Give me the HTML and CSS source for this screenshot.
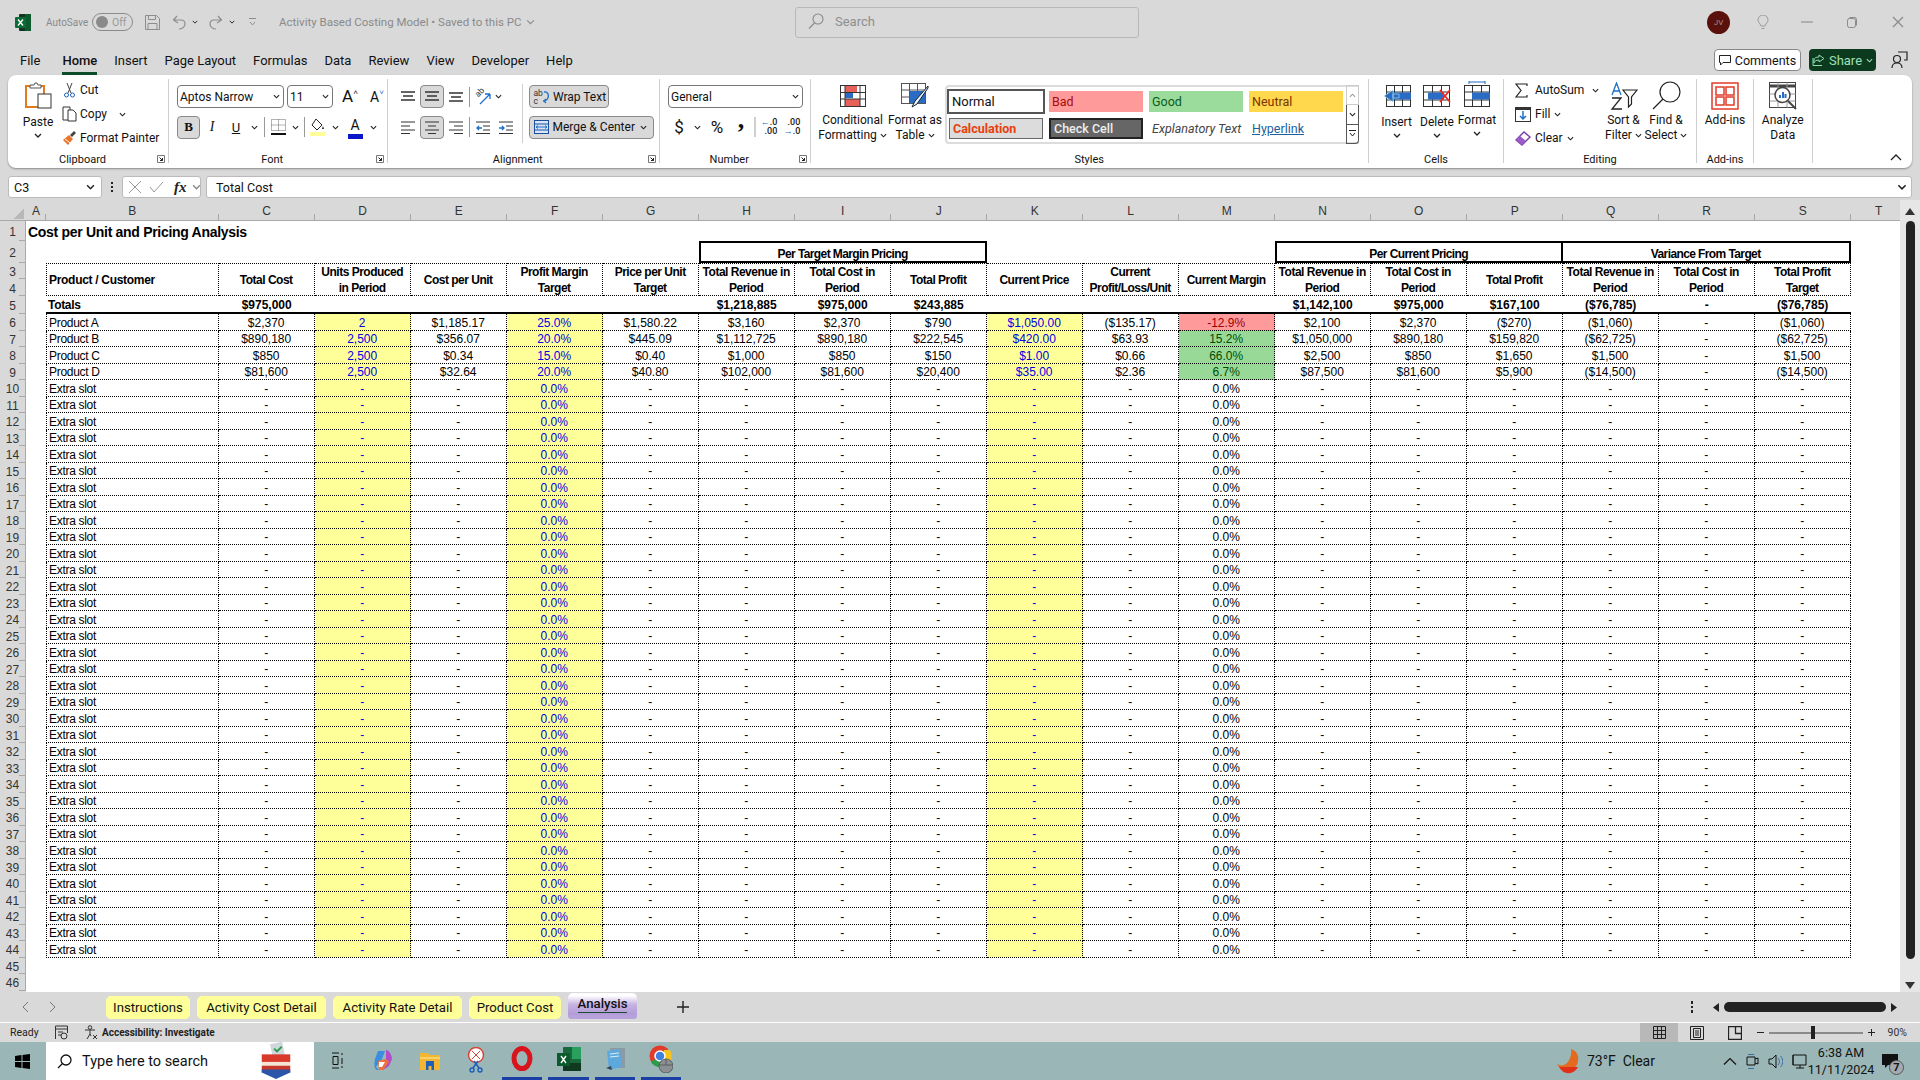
FILE: index.html
```html
<!DOCTYPE html>
<html lang="en">
<head>
<meta charset="utf-8">
<title>Activity Based Costing Model</title>
<link rel="stylesheet" href="styles.css">
</head>
<body>
<svg class="defs" width="0" height="0">
  <symbol id="chv" viewBox="0 0 8 5"><path d="M1 1l3 3 3-3" fill="none" stroke="#222" stroke-width="1.3"/></symbol>
  <symbol id="launch" viewBox="0 0 8 8"><path d="M.5.5h7v7h-7z" fill="none" stroke="#777"/><path d="M2.5 2.5l3 3M3 5.5h2.5V3" fill="none" stroke="#222"/></symbol>
</svg>
<div class="app">

<header class="titlebar">
  <div class="tb-left">
    <svg class="xl" width="16" height="17" viewBox="0 0 16 17"><rect x="4" width="12" height="17" rx="1" fill="#12351f"/><rect x="10" width="6" height="17" fill="#0c5a2e"/><rect y="3" width="11" height="11" rx="1" fill="#0d6b38"/><path d="M3 5.5l5 6M8 5.5l-5 6" stroke="#fff" stroke-width="1.3"/></svg>
    <span class="autosave">AutoSave</span>
    <span class="toggle"><i></i>Off</span>
    <svg class="t-save" width="15" height="15" viewBox="0 0 15 15" fill="none" stroke="#8d8d8d"><path d="M.5.5h11l3 3v11H.5z"/><path d="M3.5.5v4h7v-4M3 14.5v-6h9v6"/></svg>
    <svg class="t-undo" width="14" height="15" viewBox="0 0 14 15" fill="none" stroke="#8d8d8d" stroke-width="1.2"><path d="M5 1L1.500 5 6 8M1.500 5H9c3 0 4 2 4 4 0 3-3 5-6 5"/></svg>
    <svg class="t-c1" width="6" height="4"><use href="#chv"/></svg>
    <svg class="t-redo" width="14" height="15" viewBox="0 0 14 15" fill="none" stroke="#8d8d8d" stroke-width="1.2"><path d="M9 1l3.500 4L8 8M12.500 5H5C2 5 1 7 1 9c0 3 3 5 6 5"/></svg>
    <svg class="t-c2" width="6" height="4"><use href="#chv"/></svg>
    <svg class="t-qat" width="7" height="8" viewBox="0 0 7 8" fill="none" stroke="#8d8d8d"><path d="M0 .5h7M1 4l2.500 3L6 4"/></svg>
    <span class="doc">Activity Based Costing Model • Saved to this PC</span>
    <svg class="t-c3" width="9" height="6" viewBox="0 0 8 5" fill="none" stroke="#8d8d8d"><path d="M1 1l3 3 3-3"/></svg>
  </div>
  <div class="search">
    <svg width="16" height="16" viewBox="0 0 16 16" fill="none" stroke="#8a8a8a" stroke-width="1.1"><circle cx="10" cy="6" r="5"/><path d="M6.500 10L1 15.500"/></svg>
    <span>Search</span>
  </div>
  <div class="tb-right">
    <span class="avatar">JV</span>
    <svg class="t-bulb" width="12" height="15" viewBox="0 0 12 15" fill="none" stroke="#9a9a9a"><path d="M4 11C3 8 1 7.500 1 5a5 5 0 0110 0c0 2.500-2 3-3 6zM4.500 13.500h3"/></svg>
    <svg class="t-min" width="12" height="2"><path d="M0 1h12" stroke="#a0a0a0" stroke-width="1.500"/></svg>
    <svg class="t-max" width="10" height="11" viewBox="0 0 10 11" fill="none" stroke="#8a8a8a"><rect x=".5" y="1.500" width="8" height="9" rx="2"/><path d="M2.500.5h5a2 2 0 012 2v6"/></svg>
    <svg class="t-close" width="12" height="12" fill="none" stroke="#8a8a8a" stroke-width="1.200"><path d="M1 1l10 10M11 1L1 11"/></svg>
  </div>
</header>

<nav class="menubar">
  <span class="m-file">File</span><span class="m-on">Home</span><span>Insert</span><span>Page Layout</span><span>Formulas</span><span>Data</span><span>Review</span><span>View</span><span>Developer</span><span>Help</span>
  <div class="m-right">
    <span class="comments"><svg width="12" height="11" viewBox="0 0 12 11" fill="none" stroke="#222"><path d="M.5.5h11v7H4L1.500 10V7.500h-1z"/></svg>Comments</span>
    <span class="share"><svg width="13" height="12" viewBox="0 0 13 12" fill="none" stroke="#8fdcae"><path d="M7 1l5 3.500L7 8V6C4 6 3 7 2 9V6c0-2 2-3 5-3zM1 4v7.500h9"/></svg>Share<svg width="7" height="5" viewBox="0 0 8 5" fill="none" stroke="#9fe0b8" stroke-width="1.200"><path d="M1 1l3 3 3-3"/></svg></span>
    <svg class="presenter" width="17" height="18" viewBox="0 0 17 18" fill="none" stroke="#222" stroke-width="1.200"><circle cx="6" cy="8" r="3.500"/><path d="M1 17c0-3 2-5 5-5s5 2 5 5M7 1h9v8h-3"/></svg>
  </div>
</nav>

<section class="ribbon">
  <div class="grp g-clip">
    <div class="gbody">
      <div class="big w48">
        <div class="big-ic"><svg width="27" height="27" viewBox="0 0 27 27"><rect x="1" y="4" width="18" height="21" fill="#fff" stroke="#e07b20" stroke-width="2"/><path d="M5 6V3h4l1-2 2 0 1 2h3v3z" fill="#fff" stroke="#555"/><rect x="13" y="12" width="13" height="14" fill="#fff" stroke="#333"/></svg></div>
        <div class="big-tx low">Paste</div>
        <svg class="chv" width="8" height="5"><use href="#chv"/></svg>
      </div>
      <div class="rows3">
        <div class="r3"><svg class="r3-ic" width="11" height="16" viewBox="0 0 11 16" fill="none" stroke="#444"><path d="M3 1l4 10M8 1L4 11"/><circle cx="2.500" cy="13" r="2" stroke="#1d5fb8"/><circle cx="8.500" cy="13" r="2" stroke="#1d5fb8"/></svg>Cut</div>
        <div class="r3"><svg class="r3-ic" width="15" height="16" viewBox="0 0 15 16" fill="none" stroke="#333"><path d="M1 1h7v13H1z"/><path d="M6 4h5l3 3v8H6z" fill="#fff"/></svg>Copy<svg class="copy-c" width="7" height="5"><use href="#chv"/></svg></div>
        <div class="r3"><svg class="r3-ic" width="15" height="16" viewBox="0 0 15 16"><path d="M8 5l4-4 2 2-4 4z" fill="#444"/><path d="M1 10l6-5 4 4-5 6z" fill="#e8742a"/><path d="M3 9l5 4" stroke="#fff"/></svg>Format Painter</div>
      </div>
    </div>
    <div class="glabel"><span>Clipboard</span><svg width="8" height="8"><use href="#launch"/></svg></div>
  </div>

  <div class="grp g-font">
    <div class="gbody two">
      <div class="row">
        <span class="sel sel-font">Aptos Narrow<svg width="7" height="5"><use href="#chv"/></svg></span>
        <span class="sel sel-size">11<svg width="7" height="5"><use href="#chv"/></svg></span>
        <span class="s grow">A<sup>˄</sup></span><span class="s shrink">A<sup>˅</sup></span>
      </div>
      <div class="row">
        <span class="s w23 on fb">B</span><span class="s w24 fi">I</span><span class="s w24 fu">U</span>
        <span class="s w12"><svg width="7" height="5"><use href="#chv"/></svg></span><span class="s w8"><i class="vdiv"></i></span>
        <span class="s w20"><svg width="15" height="17" viewBox="0 0 15 17" fill="none" stroke="#666"><path stroke-dasharray="1 1" d="M.5.5h14v11H.5zM7.500.5v11M.5 6h14"/><path d="M0 15h15" stroke="#111" stroke-width="2"/></svg></span>
        <span class="s w14"><svg width="7" height="5"><use href="#chv"/></svg></span><span class="s w4"><i class="vdiv"></i></span>
        <span class="s w22"><svg width="15" height="18" viewBox="0 0 15 18"><path d="M6 1l6 6-5 5-5-5z" fill="#fff" stroke="#222"/><path d="M13 8l1 3h-2z" fill="#222"/><rect y="14" width="15" height="4" fill="#ffff99"/></svg></span>
        <span class="s w14"><svg width="7" height="5"><use href="#chv"/></svg></span>
        <span class="s w26 fcolor">A</span><span class="s w10"><svg width="7" height="5"><use href="#chv"/></svg></span>
      </div>
    </div>
    <div class="glabel"><span>Font</span><svg width="8" height="8"><use href="#launch"/></svg></div>
  </div>

  <div class="grp g-align">
    <div class="gbody">
      <div class="a-left">
        <div class="row">
          <span class="s w24"><svg width="14" height="11" stroke="#333"><path d="M0 1h14M2 5h10M0 9h14" stroke-width="1.300"/></svg></span>
          <span class="s w24 on"><svg width="14" height="11" stroke="#333"><path d="M0 1h14M2 5h10M0 9h14" stroke-width="1.300"/></svg></span>
          <span class="s w24"><svg width="14" height="11" stroke="#333"><path d="M0 2h14M2 6h10M0 10h14" stroke-width="1.300"/></svg></span>
          <span class="s w4"><i class="vdiv"></i></span>
          <span class="s w22 ori-wrap"><span class="ori">ab</span><svg width="16" height="16" viewBox="0 0 16 16" fill="none"><path d="M5 15L15 5M15 5v5M15 5h-5" stroke="#1d6fc8" stroke-width="1.300"/></svg></span>
          <span class="s w10"><svg width="7" height="5"><use href="#chv"/></svg></span>
        </div>
        <div class="row">
          <span class="s w24"><svg width="14" height="13" stroke="#333"><path d="M0 1h14M0 5h9M0 9h14M0 12.500h9" stroke-width="1.200"/></svg></span>
          <span class="s w24 on"><svg width="14" height="13" stroke="#333"><path d="M0 1h14M3 5h8M0 9h14M3 12.500h8" stroke-width="1.200"/></svg></span>
          <span class="s w24"><svg width="14" height="13" stroke="#333"><path d="M0 1h14M5 5h9M0 9h14M5 12.500h9" stroke-width="1.200"/></svg></span>
          <span class="s w4"><i class="vdiv"></i></span>
          <span class="s w22"><svg width="14" height="13" fill="none" stroke="#333"><path d="M0 1h14M7 5h7M7 9h7M0 12.500h14"/><path d="M6 7H1M3 5L1 7l2 2" stroke="#1d6fc8" stroke-width="1.300"/></svg></span>
          <span class="s w24"><svg width="14" height="13" fill="none" stroke="#333"><path d="M0 1h14M7 5h7M7 9h7M0 12.500h14"/><path d="M0 7h5M3 5l2 2-2 2" stroke="#1d6fc8" stroke-width="1.300"/></svg></span>
        </div>
      </div>
      <div class="a-right">
        <span class="btn b-wrap"><span class="abc">ab<br>c</span><svg width="7" height="16" viewBox="0 0 7 16" fill="none"><path d="M1 3c6-1 6 9-1 9M3 10l-2 2 2 2" stroke="#1d6fc8" stroke-width="1.300"/></svg>Wrap Text</span>
        <span class="btn b-merge"><svg width="15" height="14" viewBox="0 0 15 14"><rect x=".5" y=".5" width="14" height="13" fill="#d8e6f7" stroke="#1d4f9c"/><path d="M1 4h13M1 10h13" stroke="#1d4f9c"/><path d="M2 7h11M4 5.500L2 7l2 1.500M11 5.500L13 7l-2 1.500" fill="none" stroke="#1d6fc8"/></svg>Merge &amp; Center<svg class="push" width="7" height="5"><use href="#chv"/></svg></span>
      </div>
    </div>
    <div class="glabel"><span>Alignment</span><svg width="8" height="8"><use href="#launch"/></svg></div>
  </div>

  <div class="grp g-num">
    <div class="gbody two">
      <div class="row"><span class="sel sel-num">General<svg width="7" height="5"><use href="#chv"/></svg></span></div>
      <div class="row">
        <span class="s w22 nsym">$</span><span class="s w14"><svg width="7" height="5"><use href="#chv"/></svg></span>
        <span class="s w26 nsym">%</span><span class="s w22 ncomma">,</span>
        <span class="s w6"><i class="vdiv lt"></i></span>
        <span class="s w22 dec"><span><b>←</b>.0<br>.00</span></span><span class="s w24 dec"><span>.00<br><b>→</b>.0</span></span>
      </div>
    </div>
    <div class="glabel"><span>Number</span><svg width="8" height="8"><use href="#launch"/></svg></div>
  </div>

  <div class="grp g-style">
    <div class="gbody">
      <div class="big w68 ml8">
        <div class="big-ic"><svg width="26" height="22" viewBox="0 0 26 22" fill="#fff" stroke="#333"><rect x=".5" y=".5" width="25" height="21"/><rect x="5" y="1" width="12" height="6" fill="#e8605a" stroke="none"/><rect x="5" y="8" width="8" height="5" fill="#2a6cc4" stroke="none"/><rect x="5" y="14" width="15" height="7" fill="#e8605a" stroke="none"/><path d="M.5 7.500h25M.5 14h25M5 .5v21M20 .5v21"/></svg></div>
        <div class="big-tx">Conditional<br>Formatting <svg width="7" height="5"><use href="#chv"/></svg></div>
      </div>
      <div class="big w57">
        <div class="big-ic"><svg width="28" height="25" viewBox="0 0 28 25" fill="#fff" stroke="#555"><rect x=".5" y=".5" width="24" height="20"/><path d="M.5 7h24M.5 14h24M8.500.5v20M16.500.5v20"/><rect x="9" y="8" width="15" height="12" fill="#2a6cc4" stroke="none"/><path d="M27 3L14 18l-3 6 5-3L27 5z" fill="#e9f1fb" stroke="#123"/></svg></div>
        <div class="big-tx">Format as<br>Table <svg width="7" height="5"><use href="#chv"/></svg></div>
      </div>
      <div class="gallery">
        <div class="cells">
          <span class="st st-normal">Normal</span><span class="st st-bad">Bad</span><span class="st st-good">Good</span><span class="st st-neutral">Neutral</span>
          <span class="st st-calc">Calculation</span><span class="st st-check">Check Cell</span><span class="st st-expl">Explanatory Text</span><span class="st st-link">Hyperlink</span>
        </div>
        <div class="spin">
          <span class="spa"><svg width="7" height="5" class="flip" viewBox="0 0 8 5" fill="none" stroke="#999" stroke-width="1.200"><path d="M1 1l3 3 3-3"/></svg></span>
          <span class="spb"><svg width="7" height="5"><use href="#chv"/></svg></span>
          <span class="spc"><svg width="7" height="8" fill="none" stroke="#222"><path d="M0 .5h7M1 3l2.500 3L6 3"/></svg></span>
        </div>
      </div>
    </div>
    <div class="glabel nol"><span>Styles</span></div>
  </div>

  <div class="grp g-cells">
    <div class="gbody">
      <div class="big w41">
        <div class="big-ic"><svg width="28" height="22" viewBox="0 0 28 22" fill="#fff" stroke="#333"><rect x="3.500" y=".5" width="24" height="21"/><path d="M3.500 7h24M3.500 15h24M11.500.5v21M19.500.5v21"/><rect x="8" y="7.500" width="20" height="7" fill="#2a6cc4" stroke="none"/><path d="M10 5L1 11l9 6zM10 9h6v4h-6z" fill="#2a6cc4" stroke="#cfe" stroke-width=".5"/></svg></div>
        <div class="big-tx low">Insert</div><svg class="chv" width="8" height="5"><use href="#chv"/></svg>
      </div>
      <div class="big w40">
        <div class="big-ic"><svg width="28" height="22" viewBox="0 0 28 22" fill="#fff" stroke="#333"><rect x=".5" y=".5" width="26" height="21"/><path d="M.5 7h26M.5 15h26M9.500.5v21M18.500.5v21"/><rect x="5" y="7.500" width="16" height="7" fill="#2a6cc4" stroke="none"/><path d="M17 5l10 12M27 5L17 17" stroke="#ee2a20" stroke-width="1.800" fill="none"/></svg></div>
        <div class="big-tx low">Delete</div><svg class="chv" width="8" height="5"><use href="#chv"/></svg>
      </div>
      <div class="big w40">
        <div class="big-ic up"><svg width="28" height="26" viewBox="0 0 28 26" fill="#fff" stroke="#333"><path d="M6 1h16M6 0v3M22 0v3" stroke="#1d6fc8"/><rect x="1.500" y="4.500" width="25" height="21"/><path d="M1.500 11h25M1.500 19h25M9.500 4.500v21M18.500 4.500v21"/><rect x="9" y="11.500" width="18" height="7" fill="#2a6cc4" stroke="none"/></svg></div>
        <div class="big-tx">Format</div><svg class="chv" width="8" height="5"><use href="#chv"/></svg>
      </div>
    </div>
    <div class="glabel nol"><span>Cells</span></div>
  </div>

  <div class="grp g-edit">
    <div class="gbody">
      <div class="rows3 ed">
        <div class="r3"><span class="ed-ic"><svg width="13" height="15" viewBox="0 0 13 15" fill="none" stroke="#222" stroke-width="1.200"><path d="M12 3V1H1l5 6.500L1 14h11v-2"/></svg></span>AutoSum<svg class="auto-c" width="7" height="5"><use href="#chv"/></svg></div>
        <div class="r3"><span class="ed-ic"><svg width="16" height="15" viewBox="0 0 16 15" fill="#fff" stroke="#333"><rect x=".5" y="2.500" width="15" height="12"/><path d="M8 4v8M5 9l3 3 3-3" fill="none" stroke="#1d6fc8" stroke-width="1.500"/><path d="M0 1h16" stroke="#333" stroke-width="2"/></svg></span>Fill<svg class="fill-c" width="7" height="5"><use href="#chv"/></svg></div>
        <div class="r3"><span class="ed-ic"><svg width="16" height="15" viewBox="0 0 16 15"><path d="M1 9l8-8 6 5-8 8z" fill="#fff" stroke="#7a3fa8" stroke-width="1.400"/><path d="M1 9l4-4 6 5-4 4z" fill="#9a5cc8"/></svg></span>Clear<svg class="fill-c" width="7" height="5"><use href="#chv"/></svg></div>
      </div>
      <div class="big w43">
        <div class="big-ic"><svg width="28" height="28" viewBox="0 0 28 28" fill="none"><path d="M2 13l4.500-12L11 13M3.500 9h6" stroke="#1d6fc8" stroke-width="1.300"/><path d="M2 16h9L2 27h10" stroke="#222" stroke-width="1.300"/><path d="M13 8h14l-5.500 7v7l-3 3V15z" stroke="#222" stroke-width="1.200"/></svg></div>
        <div class="big-tx">Sort &amp;<br>Filter <svg width="7" height="5"><use href="#chv"/></svg></div>
      </div>
      <div class="big w42">
        <div class="big-ic"><svg width="29" height="29" viewBox="0 0 29 29" fill="none" stroke="#222" stroke-width="1.200"><circle cx="18" cy="11" r="10"/><path d="M11 18L1 28"/></svg></div>
        <div class="big-tx">Find &amp;<br>Select <svg width="7" height="5"><use href="#chv"/></svg></div>
      </div>
    </div>
    <div class="glabel nol"><span>Editing</span></div>
  </div>

  <div class="grp g-add">
    <div class="gbody cen">
      <div class="big">
        <div class="big-ic"><svg width="28" height="28" viewBox="0 0 28 28" fill="#fff" stroke="#e23b2a" stroke-width="1.500"><rect x="1" y="1" width="26" height="26" fill="none"/><rect x="5" y="5" width="8" height="8"/><rect x="15" y="5" width="8" height="8"/><rect x="5" y="15" width="8" height="8"/><rect x="15" y="15" width="8" height="8"/></svg></div>
        <div class="big-tx">Add-ins</div>
      </div>
    </div>
    <div class="glabel nol"><span>Add-ins</span></div>
  </div>

  <div class="grp g-ana">
    <div class="gbody cen">
      <div class="big">
        <div class="big-ic"><svg width="28" height="28" viewBox="0 0 28 28" fill="#fff" stroke="#444"><rect x=".5" y=".5" width="26" height="25"/><path d="M.5 4h26" stroke-width="3"/><path d="M.5 12h26M.5 19h26M9 .5v25M18 .5v25" stroke="#999"/><circle cx="13.500" cy="13" r="7.500" stroke-width="1.500"/><path d="M11 16v-3M14 16v-6M16.500 16v-4" stroke="#2a6cc4" stroke-width="2"/><path d="M19 19l8 8" stroke-width="2"/></svg></div>
        <div class="big-tx">Analyze<br>Data</div>
      </div>
    </div>
  </div>

  <div class="rib-end"><svg width="12" height="7" viewBox="0 0 12 7" fill="none" stroke="#222" stroke-width="1.300"><path d="M1 6l5-5 5 5"/></svg></div>
</section>

<section class="formula">
  <div class="namebox">C3<svg width="9" height="6" viewBox="0 0 8 5"><use href="#chv"/></svg></div>
  <div class="fdots"><i></i><i></i><i></i></div>
  <div class="fbtns">
    <svg width="14" height="14" stroke="#999" fill="none"><path d="M1 1l12 12M13 1L1 13"/></svg>
    <svg width="15" height="12" stroke="#999" fill="none"><path d="M1 6l4 5 9-10"/></svg>
    <span class="fx">fx</span>
    <svg width="9" height="6" viewBox="0 0 8 5" fill="none" stroke="#888" stroke-width="1.200"><path d="M1 1l3 3 3-3"/></svg>
  </div>
  <div class="finput"><span>Total Cost</span><svg width="10" height="6" viewBox="0 0 8 5"><use href="#chv"/></svg></div>
</section>

<main class="sheetwrap">
  <div class="sheet" id="sheet"></div>
  <div class="vscroll">
    <svg width="10" height="7"><path d="M5 0l5 7H0z" fill="#333"/></svg>
    <i></i>
    <svg width="10" height="7"><path d="M5 7l5-7H0z" fill="#333"/></svg>
  </div>
</main>

<section class="tabsbar">
  <svg class="tnav n1" width="7" height="12" fill="none" stroke="#777"><path d="M6 1L1 6l5 5"/></svg>
  <svg class="tnav n2" width="7" height="12" fill="none" stroke="#777"><path d="M1 1l5 5-5 5"/></svg>
  <div class="tabs">
    <span class="tab t1">Instructions</span><span class="tab t2">Activity Cost Detail</span><span class="tab t3">Activity Rate Detail</span><span class="tab t4">Product Cost</span><span class="tab t5"><b>Analysis</b></span>
  </div>
  <svg class="tplus" width="12" height="12" stroke="#222" stroke-width="1.400"><path d="M6 0v12M0 6h12"/></svg>
  <div class="hs">
    <span class="hdots"><i></i><i></i><i></i></span>
    <svg width="6" height="9"><path d="M6 0v9L0 4.500z" fill="#222"/></svg>
    <i class="hthumb"></i>
    <svg width="6" height="9"><path d="M0 0v9l6-4.500z" fill="#222"/></svg>
  </div>
</section>

<footer class="status">
  <span class="ready">Ready</span>
  <svg class="st-macro" width="13" height="15" viewBox="0 0 13 15" fill="none" stroke="#333"><path d="M.5 1h12M.5 4h12M.5 14V1M12.500 1v7M3 7h5M3 10h3"/><circle cx="9" cy="11" r="3"/></svg>
  <svg class="st-acc" width="14" height="15" viewBox="0 0 14 15" fill="none" stroke="#333"><circle cx="6" cy="2.500" r="1.800"/><path d="M1 5h10M6 5v4M6 9l-3 5M6 9l1 2M9 10l4 4M13 10l-4 4"/></svg>
  <span class="acc">Accessibility: Investigate</span>
  <div class="st-right">
    <span class="view on-v"><svg width="13" height="13" stroke="#222" fill="none"><path d="M.5.5h12v12H.5zM4.500.5v12M8.500.5v12M.5 4.500h12M.5 8.500h12"/></svg></span>
    <span class="view"><svg width="14" height="14" fill="none" stroke="#222"><path d="M.5.5h13v13H.5z"/><path d="M3.500 2.500h7v9h-7zM5 5h4M5 7h4M5 9h4"/></svg></span>
    <span class="view"><svg width="14" height="14" fill="none" stroke="#222"><path d="M.5.5h13v13H.5zM7.500.5v7h6" stroke-width="1.300"/></svg></span>
    <svg class="zm-minus" width="7" height="1"><path d="M0 .5h7" stroke="#222"/></svg>
    <span class="slider"><i></i></span>
    <svg width="7" height="7" stroke="#222"><path d="M3.500 0v7M0 3.500h7"/></svg>
    <span class="pct">90%</span>
  </div>
</footer>

<footer class="taskbar">
  <span class="win"><svg width="15" height="15" fill="#000"><path d="M0 2l6.500-1v6H0zM7.500 1L15 0v7H7.500zM0 8h6.500v6L0 13zM7.500 8H15v7l-7.500-1z"/></svg></span>
  <div class="tsearch">
    <svg width="15" height="15" fill="none" stroke="#111" stroke-width="1.300"><circle cx="9" cy="6" r="5"/><path d="M5.500 9.500L1 14"/></svg>
    <span>Type here to search</span>
    <svg class="ballot" width="34" height="38" viewBox="0 0 34 40"><rect x="12" y="1" width="13" height="14" fill="#cfd6dc" transform="rotate(-12 18 8)"/><path d="M15 7l3 3 5-5" stroke="#2a9d4a" stroke-width="2" fill="none"/><path d="M2 13h30v8H2z" fill="#d8392b"/><path d="M2 21h30v6H2z" fill="#f2e5d5"/><path d="M2 25h30v7H2z" fill="#c9392b"/><path d="M2 32l15 7 15-7v-3H2z" fill="#2a55a8"/></svg>
  </div>
  <div class="tapps">
    <span class="tapp"><svg width="12" height="17" fill="none" stroke="#111"><path d="M1 1h7M1 16h7M2 4.500h5v8H2zM11 1v2M11 6v6M11 14v2"/></svg></span>
    <span class="tapp"><svg width="20" height="22" viewBox="0 0 20 22"><path d="M5 2h7l-3 8-6 8 3 3H4C1 20 1 15 2 10z" fill="#3a8ee0"/><path d="M13 1c3 0 6 5 6 9l-3 7-6 4-1-4 4-7z" fill="#b24cc8"/><path d="M5 12l8-2 3 3-6 8H6z" fill="#f0703a"/><path d="M6 13h6l-3 5H6z" fill="#fff"/></svg></span>
    <span class="tapp"><svg width="20" height="19" viewBox="0 0 20 19"><path d="M0 2h8l2 2h10v15H0z" fill="#f2b632"/><path d="M0 6h20v2H0z" fill="#f8d169"/><path d="M6 10h8v9h-2.500v-4h-3v4H6z" fill="#1d5fb8"/></svg></span>
    <span class="tapp"><svg width="20" height="26" viewBox="0 0 20 26" fill="none"><circle cx="10" cy="8" r="7.500" fill="#fff" stroke="#d8483a" stroke-width="1.500"/><path d="M6 4l8 8M14 4L6 12" stroke="#d8483a"/><path d="M8 14l5 7M12 14l-5 7" stroke="#1d5fb8" stroke-width="1.500"/><circle cx="6" cy="23" r="2" stroke="#1d5fb8" stroke-width="1.400"/><circle cx="14" cy="23" r="2" stroke="#1d5fb8" stroke-width="1.400"/></svg></span>
    <span class="tapp run"><svg width="22" height="25" fill="none"><ellipse cx="11" cy="12.500" rx="8" ry="10" stroke="#d8141c" stroke-width="5"/></svg></span>
    <span class="tapp run"><svg width="24" height="24" viewBox="0 0 24 24"><rect x="6" width="18" height="24" rx="1" fill="#17693b"/><rect x="15" width="9" height="12" fill="#2aa05f"/><rect x="6" y="16" width="18" height="8" fill="#0f3a20"/><rect y="6" width="13" height="13" fill="#0b5a2c"/><path d="M4 9l5 7M9 9l-5 7" stroke="#fff" stroke-width="1.300"/></svg></span>
    <span class="tapp run"><svg width="22" height="26" viewBox="0 0 22 26"><path d="M6 2h15v20H6z" fill="#8c9aa5"/><path d="M3 5l13-2 2 18-13 3z" fill="#5ea9dc"/><path d="M6 8l9-1M6 11l9-1" stroke="#d9eefc"/><path d="M2 22l5-2 1 4z" fill="#345"/></svg></span>
    <span class="tapp run"><svg width="24" height="28" viewBox="0 0 24 28"><circle cx="11" cy="11" r="10.500" fill="#e23b2a"/><path d="M2 17a10.500 10.500 0 0018 0l-5-5H9z" fill="#2a9d4a"/><path d="M15 5h6a10.500 10.500 0 01-4 15l-3-6z" fill="#f5c31c"/><circle cx="11" cy="11" r="5" fill="#3f7fe0" stroke="#fff" stroke-width="1.500"/><rect x="10" y="14" width="14" height="14" rx="7" fill="#8a8f92" stroke="#5a5f62"/><path d="M17 14v6M10 20h14" stroke="#5a5f62"/></svg></span>
  </div>
  <div class="tray">
    <svg class="moon" width="22" height="25" viewBox="0 0 22 25"><path d="M14 0c6 2 8 7 7 12-1 7-7 11-13 10-3-1-6-3-8-7 3 2 7 2 10-1 3-3 5-9 4-14z" fill="#e36a1f"/><path d="M2 18h19c-2 4-7 7-11 6-3 0-6-3-8-6z" fill="#e0301a"/></svg>
    <span class="weather">73°F&nbsp; Clear</span>
    <svg class="tr-up" width="14" height="8" fill="none" stroke="#111" stroke-width="1.200"><path d="M1 7.500l6-6 6 6"/></svg>
    <svg class="tr-cam" width="13" height="17" fill="none" stroke="#111"><path d="M1 4h8v8H1zM9 6l3-1v6l-3-1"/><path d="M2 1.500h6M2 15.500h6" stroke="#3a6ea5"/></svg>
    <svg class="tr-spk" width="15" height="15" fill="none" stroke="#111"><path d="M1 5h3l4-4v13l-4-4H1z"/><path d="M10 4c2 2 2 5 0 7M12.500 2c3 3 3 8 0 11" stroke="#3a6ea5"/></svg>
    <svg class="tr-net" width="17" height="15" fill="none" stroke="#111"><path d="M3 1h13v10H3zM3 1v10M10 11v3M6 14h8"/></svg>
    <span class="clock">6:38 AM<br>11/11/2024</span>
    <span class="notif"><svg width="16" height="14" fill="#111"><path d="M0 0h16v11H6l-3 3v-3H0z"/></svg><em>7</em></span>
  </div>
</footer>

</div>
<script src="script.js"></script>
</body>
</html>
```
FILE: styles.css
```css
* { box-sizing: border-box; }
html, body { margin: 0; padding: 0; }
body { width: 1920px; height: 1080px; overflow: hidden; background: #d9d9d9; font-family: Roboto, "Liberation Sans", sans-serif; color: #111; font-size: 12px; }
.defs { position: absolute; }
.app { display: flex; flex-direction: column; height: 1080px; }
svg { flex: none; display: block; }

/* title bar */
.titlebar { display: flex; align-items: center; height: 44px; flex: none; }
.tb-left { display: flex; align-items: center; width: 795px; padding-left: 15px; color: #8a8a8a; }
.autosave { margin-left: 15px; font-size: 10px; width: 40px; white-space: nowrap; }
.toggle { margin-left: 6px; width: 41px; height: 18px; border: 1.500px solid #8a8a8a; border-radius: 9px; display: flex; align-items: center; font-size: 10.500px; gap: 4px; padding-left: 3px; color: #999; }
.toggle i { width: 12px; height: 12px; border-radius: 50%; background: #8a8a8a; }
.t-save { margin-left: 12px; }
.t-undo { margin-left: 12px; }
.t-c1 { margin-left: 6px; }
.t-redo { margin-left: 11px; }
.t-c2 { margin-left: 6px; }
.t-qat { margin-left: 14px; }
.doc { margin-left: 23px; font-size: 11.500px; white-space: nowrap; }
.t-c3 { margin-left: 5px; }
.search { width: 344px; height: 31px; border: 1.500px solid #b8b8b8; border-radius: 3px; display: flex; align-items: center; padding: 0 0 2px 12px; gap: 11px; color: #8e8e8e; font-size: 13px; }
.tb-right { margin-left: auto; display: flex; align-items: center; padding-right: 16px; }
.avatar { width: 23px; height: 23px; border-radius: 50%; background: #5b110b; color: #a5908c; font-size: 8px; display: flex; align-items: center; justify-content: center; }
.t-bulb { margin-left: 27px; }
.t-min { margin-left: 32px; }
.t-max { margin-left: 34px; }
.t-close { margin-left: 35px; }

/* menu */
.menubar { display: flex; align-items: center; height: 31px; flex: none; padding: 1px 12px 0 20px; gap: 17px; font-size: 13px; }
.m-file { margin-right: 5px; }
.m-on { position: relative; font-weight: 500; }
.m-on::after { content: ""; position: absolute; left: 0; right: 0; bottom: -7px; height: 2.500px; background: #0e4d2a; }
.m-right { margin-left: auto; display: flex; align-items: center; }
.comments { width: 87px; height: 22px; background: #fff; border: 1px solid #888; border-radius: 4px; display: flex; align-items: center; justify-content: center; gap: 4px; font-size: 12.500px; }
.share { margin-left: 8px; width: 67px; height: 22px; background: #0b3a1e; border-radius: 4px; color: #9fe0b8; display: flex; align-items: center; justify-content: center; gap: 4px; font-size: 13px; }
.presenter { margin-left: 15px; }

/* ribbon */
.ribbon { display: flex; flex: none; height: 93px; margin: 0 8px; background: #fff; border-radius: 8px; padding-top: 4px; box-shadow: 0 1px 2px #8a8a8a; }
.grp { height: 84px; border-right: 1px solid #cfcfcf; flex: none; }
.g-clip { width: 161px; }
.g-font { width: 218.500px; }
.g-align { width: 272.500px; }
.g-num { width: 150.500px; }
.g-style { width: 558.500px; }
.g-cells { width: 135px; }
.g-edit { width: 193px; }
.g-add { width: 57px; }
.g-ana { width: 58.500px; }
.gbody { display: flex; height: 72px; }
.gbody.two { flex-direction: column; gap: 7.500px; padding: 6px 0 0 8px; }
.gbody.cen { justify-content: center; }
.row { display: flex; align-items: center; height: 23px; }
.glabel { display: flex; align-items: center; height: 16px; font-size: 11px; padding-right: 3px; }
.glabel span { flex: 1; text-align: center; }
.glabel.nol { padding-right: 0; }
.big { display: flex; flex-direction: column; align-items: center; flex: none; white-space: nowrap; padding: 0 4px; }
.big-ic { height: 33.500px; display: flex; align-items: center; justify-content: center; }
.big-ic.up { padding-bottom: 3px; }
.big-tx { line-height: 15px; text-align: center; font-size: 12px; }
.big-tx svg { display: inline-block; vertical-align: 1px; }
.big-tx.low { padding-top: 2px; }
.chv { margin-top: 3px; }
.w48 { width: 48px; margin-left: 6px; }
.w68 { width: 68px; }
.w57 { width: 57px; }
.w41 { width: 41px; margin-left: 7px; }
.w40 { width: 40px; }
.w43 { width: 43px; }
.w42 { width: 42px; }
.ml8 { margin-left: 8px; }
.rows3 { display: flex; flex-direction: column; margin-top: -1px; }
.r3 { display: flex; align-items: center; height: 24px; white-space: nowrap; }
.r3-ic { margin-right: 3px; width: 15px; }
.copy-c { margin-left: 12px; }
.rows3.ed { width: 87px; margin-left: 11px; }
.ed-ic { width: 20px; display: flex; }
.auto-c { margin-left: 8px; }
.fill-c { margin-left: 4px; }
.s { display: flex; align-items: center; justify-content: center; flex: none; height: 23px; }
.w4 { width: 4px; } .w6 { width: 6px; } .w8 { width: 8px; } .w10 { width: 10px; } .w12 { width: 12px; } .w14 { width: 14px; } .w20 { width: 20px; } .w22 { width: 22px; } .w23 { width: 23px; } .w24 { width: 24px; } .w26 { width: 26px; }
.on { background: #d9d9d9; border: 1px solid #8a8a8a; border-radius: 4px; }
.vdiv { display: block; width: 1px; height: 20px; background: #999; }
.vdiv.lt { width: 2px; background: #cfcfcf; }
.sel { height: 23px; border: 1px solid #777; border-radius: 4px; display: flex; align-items: center; justify-content: space-between; padding: 0 3px 0 2px; flex: none; font-size: 12px; }
.sel-font { width: 107px; }
.sel-size { width: 46px; margin-left: 3px; }
.sel-num { width: 135px; }
.grow { width: 28px; font-size: 17px; margin-left: 3px; align-items: flex-end; padding-bottom: 2px; }
.shrink { width: 26px; font-size: 14px; align-items: flex-end; padding-bottom: 3px; }
.grow sup, .shrink sup { font-size: 8px; line-height: 1; align-self: flex-start; margin-top: 4px; }
.shrink sup { color: #1d6fc8; }
.fb { font-weight: 700; font-family: "Liberation Serif", serif; font-size: 13px; }
.fi { font-style: italic; font-family: "Liberation Serif", serif; font-size: 14px; }
.fu { text-decoration: underline; font-size: 13px; }
.fcolor { font-size: 14px; line-height: 1; background: linear-gradient(#0a16c8, #0a16c8) center 18px / 15px 5px no-repeat; padding-bottom: 5px; }
.ori-wrap { position: relative; }
.ori { position: absolute; left: 3px; top: 3px; font-size: 8.500px; line-height: 9px; color: #333; transform: rotate(-45deg); }
.g-align .gbody { padding-left: 8px; }
.a-left { width: 127px; border-right: 1px solid #cfcfcf; height: 59px; margin-top: 5px; display: flex; flex-direction: column; gap: 7.500px; padding-top: 1px; }
.a-right { display: flex; flex-direction: column; gap: 7.500px; margin: 6px 0 0 6px; }
.btn { display: flex; align-items: center; height: 23px; background: #d9d9d9; border: 1px solid #8a8a8a; border-radius: 4px; gap: 4px; padding-left: 4px; font-size: 12px; }
.b-wrap { width: 80px; gap: 0; }
.b-wrap svg { margin-right: 3px; }
.abc { font-size: 8.500px; line-height: 8px; color: #333; }
.b-merge { width: 125px; }
.push { margin-left: auto; margin-right: 6px; }
.nsym { font-size: 17px; }
.ncomma { font: 700 26px "Liberation Serif", serif; padding-bottom: 14px; }
.dec { font-size: 9px; line-height: 9px; color: #222; text-align: right; font-weight: 500; }
.dec b { color: #1d6fc8; font-weight: 700; }
.gallery { display: flex; width: 413.500px; height: 59px; margin: 6px 0 0 1.500px; border: 2px solid #dcdcdc; border-right: 0; border-radius: 4px 0 0 4px; }
.cells { display: grid; grid-template-columns: repeat(4, 94px); grid-template-rows: 21px 21px; gap: 6px; padding: 4px 0 0 2px; width: 398px; align-content: start; font-size: 12.500px; }
.st { display: flex; align-items: center; padding-left: 3px; white-space: nowrap; }
.st-normal { background: #fff; outline: 2px solid #555; font-size: 13px; }
.st-bad { background: #ff9a9a; color: #a80a0a; }
.st-good { background: #9bdc9c; color: #0a5a1e; }
.st-neutral { background: #ffd84e; color: #7a3300; }
.st-calc { background: #dcdcdc; color: #e8400c; font-weight: 700; border: 1px solid #666; }
.st-check { background: #666; color: #eee; font-weight: 500; border: 2px solid #222; }
.st-expl { font-style: italic; color: #444; }
.st-link { color: #1d5f9c; text-decoration: underline; }
.spin { width: 13px; display: flex; flex-direction: column; margin-left: 1px; margin-top: -2px; height: 59px; }
.spin span { display: flex; align-items: center; justify-content: center; flex: 1; border: 1px solid #555; border-top: 0; }
.spin .spa { border: 1px solid #ccc; }
.spc { border-radius: 0 0 4px 0; }
.flip { transform: rotate(180deg); }
.rib-end { flex: 1; display: flex; align-items: flex-end; justify-content: flex-end; padding: 0 10px 2px 0; height: 84px; }

/* formula bar */
.formula { display: flex; height: 22px; margin: 8px 0 2px; padding: 0 8px; flex: none; }
.namebox { width: 94px; background: #fff; border: 1px solid #bbb; border-radius: 3px; display: flex; align-items: center; justify-content: space-between; padding: 0 6px 0 5px; font-size: 12.500px; }
.fdots { width: 20px; display: flex; flex-direction: column; gap: 2px; align-items: center; justify-content: center; }
.fdots i { width: 2px; height: 2px; background: #222; }
.fbtns { width: 79px; background: #fff; border: 1px solid #bbb; border-radius: 3px; display: flex; align-items: center; gap: 7px; padding-left: 5px; }
.fx { font-family: "Liberation Serif", serif; font-style: italic; font-weight: 700; font-size: 15px; color: #222; margin-left: 3px; margin-right: -2px; }
.finput { flex: 1; margin-left: 5px; background: #fff; border: 1px solid #bbb; border-radius: 3px; display: flex; align-items: center; justify-content: space-between; padding: 0 4px 0 9px; font-size: 12.500px; }

/* sheet */
.sheetwrap { display: flex; height: 792px; flex: none; background: #fff; overflow: hidden; }
.sheet { width: 1900px; display: grid; overflow: hidden; background: linear-gradient(90deg, #d9d9d9 26px, #fff 26px); font-family: "Liberation Sans", Arial, sans-serif; font-size: 12px; color: #000; align-content: start;
  grid-template-columns: 26px 20px 172.700px repeat(17, 96px) 56px;
  grid-template-rows: 21px 20px 21.500px 16.750px 16.750px 18px repeat(41, 16.500px); }
.c { display: flex; align-items: center; justify-content: center; white-space: nowrap; min-width: 0; line-height: 16.500px; text-align: center; padding-top: 2.400px; }
.ch { background: #d9d9d9 linear-gradient(#a8a8a8, #a8a8a8) right bottom / 1px 6px no-repeat; border-bottom: 1px solid #a8a8a8; color: #333; }
.ch.last { background: #d9d9d9; }
.corner { background: #d9d9d9 linear-gradient(135deg, transparent 50%, #b8b8b8 50%) 13px 8px / 11px 11px no-repeat; border-bottom: 1px solid #a8a8a8; }
.rh { background: #d9d9d9 linear-gradient(#a8a8a8, #a8a8a8) right bottom / 6px 1px no-repeat; border-right: 1px solid #a8a8a8; color: #333; }
.title { justify-content: flex-start; font-weight: 700; font-size: 14px; padding-left: 2px; letter-spacing: -.3px; }
.sp3 { grid-column: span 3; }
.sp7 { grid-column: span 7; }
.sp19 { grid-column: span 19; }
.rs2 { grid-row: span 2; }
.box { border: 2px solid #000; font-weight: 700; align-items: flex-end; padding-top: 0; line-height: 13px; letter-spacing: -.6px; }
.box.nl { border-left: 0; }
.hd { font-weight: 700; border: 1px dotted #000; border-left: 0; letter-spacing: -.5px; }
.first { border-left: 1px dotted #000; justify-content: flex-start; padding-left: 2px; letter-spacing: -.3px; }
.tot { font-weight: 700; border-bottom: 2px solid #000; }
.tot.lbl { justify-content: flex-start; padding-left: 2px; letter-spacing: -.3px; }
.d { border-right: 1px dotted #000; border-bottom: 1px dotted #000; }
.in { background: #ffff99; color: #0000e6; }
.bad { background: #ff9a9a; color: #9c0006; }
.good { background: #98d998; color: #004d00; }
.vscroll { flex: 1; background: #e6e6e6; display: flex; flex-direction: column; align-items: center; padding: 8px 0 3px 0; }
.vscroll i { width: 9px; flex: 1; margin: 6px 0 23px; border-radius: 4.500px; background: #222; }

/* tabs */
.tabsbar { display: flex; align-items: center; height: 30px; flex: none; }
.n1 { margin-left: 22px; }
.n2 { margin-left: 20px; }
.tabs { display: flex; margin-left: 50px; gap: 7px; align-items: flex-end; height: 30px; font-size: 13.200px; }
.tab { height: 23px; margin-bottom: 3px; background: #ffff99; border-radius: 5px; display: flex; align-items: center; justify-content: center; white-space: nowrap; }
.t1 { width: 84px; } .t2 { width: 129px; } .t3 { width: 129px; } .t4 { width: 92px; }
.t5 { width: 69px; height: 26px; background: linear-gradient(#fdfdfd 0, #fff 10%, #c5b2e0 45%, #a992d6 100%); padding-bottom: 4px; border-radius: 5px 5px 4px 4px; box-shadow: inset 0 -4px 0 #b7a2dc; }
.t5 b { font-weight: 500; border-bottom: 1.500px solid #1c4a2e; line-height: 16px; }
.tplus { margin-left: 40px; }
.hs { margin-left: auto; display: flex; align-items: center; padding-right: 23px; }
.hdots { display: flex; flex-direction: column; gap: 2px; margin-right: 20px; }
.hdots i { width: 2.500px; height: 2.500px; background: #222; }
.hthumb { width: 162px; height: 10px; border-radius: 5px; background: #222; margin: 0 5px; }

/* status */
.status { display: flex; align-items: center; height: 20px; flex: none; border-top: 1px solid #fff; font-size: 10.500px; }
.ready { margin-left: 10px; width: 32px; color: #222; }
.st-macro { margin-left: 13px; }
.st-acc { margin-left: 16px; }
.acc { margin-left: 4px; font-weight: 700; font-size: 10px; color: #222; }
.st-right { margin-left: auto; display: flex; align-items: center; height: 19px; padding-right: 13px; }
.view { width: 37.700px; height: 19px; display: flex; align-items: center; justify-content: center; }
.on-v { background: #b8b8b8; }
.zm-minus { margin-left: 3px; }
.slider { width: 94px; height: 2px; background: #8a8a8a; margin: 0 5px; position: relative; }
.slider i { position: absolute; left: 42px; top: -6px; width: 4px; height: 13px; background: #222; }
.pct { margin-left: 13px; color: #333; }

/* taskbar */
.taskbar { display: flex; align-items: stretch; height: 38px; flex: none; background: #9ab6b6; }
.win { width: 46px; display: flex; align-items: center; justify-content: center; padding-right: 2px; }
.tsearch { width: 268px; background: #fff; display: flex; align-items: center; padding-left: 11px; gap: 10px; font-size: 14.500px; position: relative; overflow: hidden; }
.ballot { position: absolute; right: 21px; top: 0; }
.tapps { display: flex; }
.tapp { width: 46.300px; display: flex; align-items: center; justify-content: center; padding-bottom: 2px; }
.run { border-bottom: 3px solid #1a3fa5; margin: 0 3px; width: 40.300px; }
.tray { margin-left: auto; display: flex; align-items: center; padding-right: 16px; }
.weather { margin-left: 8px; width: 66px; font-size: 14px; white-space: nowrap; }
.tr-up { margin-left: 70px; }
.tr-cam { margin-left: 9px; }
.tr-spk { margin-left: 9px; }
.tr-net { margin-left: 7px; }
.clock { width: 68px; text-align: center; font-size: 12.500px; line-height: 17px; }
.notif { width: 22px; margin-left: 7px; position: relative; display: flex; }
.notif em { position: absolute; left: 7px; top: 6px; width: 15px; height: 15px; border-radius: 50%; border: 1px solid #555; background: #a5aab0; font-style: normal; font-weight: 700; font-size: 11px; text-align: center; line-height: 13px; }
```
FILE: script.js
```js
const sheet = document.getElementById('sheet');
function add(text, cls) {
  const d = document.createElement('div');
  d.className = 'c ' + (cls || '');
  if (text) d.innerHTML = text;
  sheet.appendChild(d);
}
const letters = 'ABCDEFGHIJKLMNOPQRST'.split('');
add('', 'corner');
letters.forEach((l, i) => add(l, i === 19 ? 'ch last' : 'ch'));

// rows 1-2
add('1', 'rh'); add('Cost per Unit and Pricing Analysis', 'title sp19'); add('');
add('2', 'rh'); add('', 'sp7');
add('Per Target Margin Pricing', 'box sp3'); add('', 'sp3');
add('Per Current Pricing', 'box sp3'); add('Variance From Target', 'box nl sp3'); add('');

// rows 3-4
const heads = ['Product / Customer', 'Total Cost', 'Units Produced<br>in Period', 'Cost per Unit', 'Profit Margin<br>Target', 'Price per Unit<br>Target',
  'Total Revenue in<br>Period', 'Total Cost in<br>Period', 'Total Profit', 'Current Price', 'Current<br>Profit/Loss/Unit', 'Current Margin',
  'Total Revenue in<br>Period', 'Total Cost in<br>Period', 'Total Profit', 'Total Revenue in<br>Period', 'Total Cost in<br>Period', 'Total Profit<br>Target'];
add('3', 'rh'); add('');
heads.forEach((h, i) => add(h, 'hd rs2' + (i === 0 ? ' first' : '')));
add('');
add('4', 'rh'); add(''); add('');

// row 5
add('5', 'rh'); add('');
['Totals', '$975,000', '', '', '', '', '$1,218,885', '$975,000', '$243,885', '', '', '', '$1,142,100', '$975,000', '$167,100', '($76,785)', '-', '($76,785)']
  .forEach((t, i) => add(t, 'tot' + (i === 0 ? ' lbl' : '')));
add('');

// rows 6-44
const data = [
  ['Product A', '$2,370', '2', '$1,185.17', '25.0%', '$1,580.22', '$3,160', '$2,370', '$790', '$1,050.00', '($135.17)', '-12.9%', '$2,100', '$2,370', '($270)', '($1,060)', '-', '($1,060)'],
  ['Product B', '$890,180', '2,500', '$356.07', '20.0%', '$445.09', '$1,112,725', '$890,180', '$222,545', '$420.00', '$63.93', '15.2%', '$1,050,000', '$890,180', '$159,820', '($62,725)', '-', '($62,725)'],
  ['Product C', '$850', '2,500', '$0.34', '15.0%', '$0.40', '$1,000', '$850', '$150', '$1.00', '$0.66', '66.0%', '$2,500', '$850', '$1,650', '$1,500', '-', '$1,500'],
  ['Product D', '$81,600', '2,500', '$32.64', '20.0%', '$40.80', '$102,000', '$81,600', '$20,400', '$35.00', '$2.36', '6.7%', '$87,500', '$81,600', '$5,900', '($14,500)', '-', '($14,500)']
];
for (let i = 0; i < 35; i++) {
  const r = ['Extra slot'];
  for (let j = 1; j < 18; j++) r.push(j === 4 || j === 11 ? '0.0%' : '-');
  data.push(r);
}
data.forEach((r, n) => {
  add(String(n + 6), 'rh'); add('');
  r.forEach((t, j) => {
    let cls = 'd';
    if (j === 0) cls += ' first';
    if (j === 2 || j === 4 || j === 9) cls += ' in';
    if (j === 11 && n < 4) cls += n === 0 ? ' bad' : ' good';
    add(t, cls);
  });
  add('');
});
add('45', 'rh'); add('', 'sp19'); add('');
add('46', 'rh'); add('', 'sp19'); add('');
```
